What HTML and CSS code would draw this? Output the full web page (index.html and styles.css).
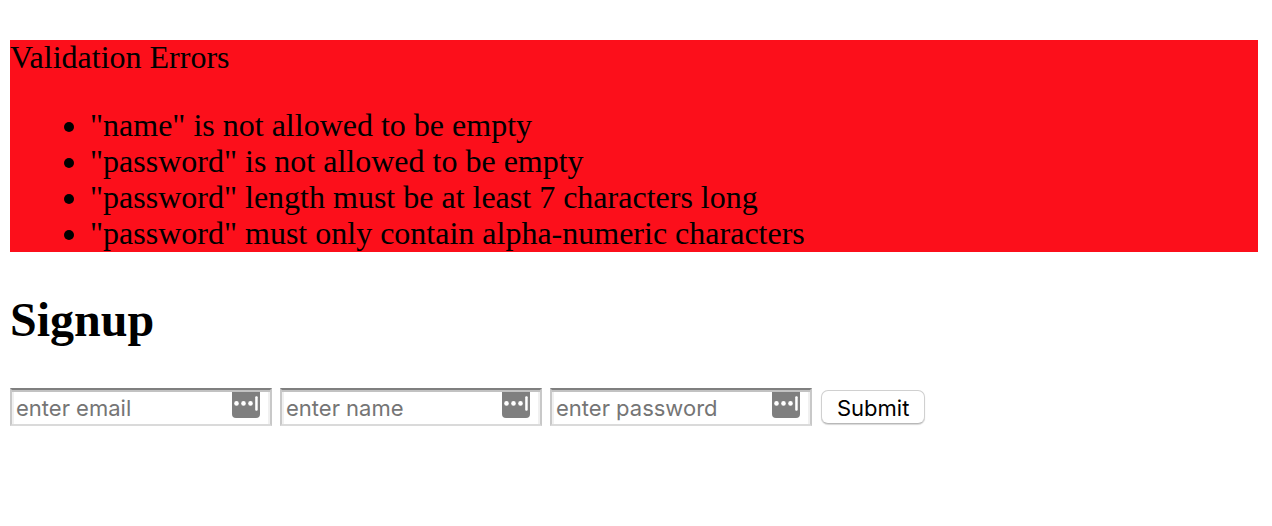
FILE: index.html
```html
<!DOCTYPE html>
<html lang="en">
<head>
<meta charset="utf-8">
<title>Signup</title>
<link rel="stylesheet" href="styles.css">
</head>
<body>
<svg class="defs" aria-hidden="true">
  <symbol id="key-badge" viewBox="0 0 28 26">
    <path fill="#7f7f7f" d="M0 0H28V22Q28 26 24 26H4Q0 26 0 22Z"/>
    <circle cx="4.500" cy="11.400" r="2.300" fill="#fff"/>
    <circle cx="11.500" cy="11.400" r="2.300" fill="#fff"/>
    <circle cx="18.500" cy="11.400" r="2.300" fill="#fff"/>
    <rect x="23.200" y="4.300" width="2.500" height="14.400" rx="1" fill="#fff"/>
  </symbol>
</svg>
<section class="errors">
  <p class="errors-title">Validation Errors</p>
  <ul class="errors-list">
    <li class="error">"name" is not allowed to be empty</li>
    <li class="error">"password" is not allowed to be empty</li>
    <li class="error">"password" length must be at least 7 characters long</li>
    <li class="error">"password" must only contain alpha-numeric characters</li>
  </ul>
</section>
<h1 class="title">Signup</h1>
<form class="signup">
  <div class="field">
    <input class="input" type="email" placeholder="enter email" aria-label="Email">
    <svg class="badge" aria-hidden="true"><use href="#key-badge"/></svg>
  </div>
  <div class="field">
    <input class="input" type="text" placeholder="enter name" aria-label="Name">
    <svg class="badge" aria-hidden="true"><use href="#key-badge"/></svg>
  </div>
  <div class="field">
    <input class="input" type="password" placeholder="enter password" aria-label="Password">
    <svg class="badge" aria-hidden="true"><use href="#key-badge"/></svg>
  </div>
  <button class="submit" type="submit">Submit</button>
</form>
</body>
</html>
```
FILE: styles.css
```css
body {
  margin: 40px 14px 40px 10px;
  background: #fff;
  color: #000;
  font-family: "Liberation Serif", "Times New Roman", serif;
  font-size: 32px;
  line-height: 34px;
}
.defs { position: absolute; width: 0; height: 0; }
.errors { background: #fc0f1b; }
.errors-title { margin: 0 0 34px; }
.errors-list { margin: 0; padding-left: 80px; }
.error { padding-bottom: 2px; }
.title { margin: 40px 0; font-size: 48px; line-height: 56px; }
.signup { display: flex; flex-wrap: wrap; align-items: center; gap: 8px; }
.field { position: relative; }
.input {
  display: block;
  box-sizing: border-box;
  width: 262px;
  height: 38px;
  margin: 0;
  padding: 2px 40px 0 4px;
  border: 2px solid #c8c8c8;
  border-top-color: #7f7f7f;
  border-bottom-color: #dadada;
  border-radius: 0;
  background: #fff;
  box-shadow: inset 0 2px #c2c2c2, inset 2px 0 #f0f0f0, inset -2px 0 #f0f0f0;
  font-family: Inter, sans-serif;
  font-size: 22px;
}
.input::placeholder { color: #757575; opacity: 1; }
.badge { position: absolute; top: 4px; right: 12px; width: 28px; height: 26px; }
.submit {
  height: 34px;
  margin-left: 1px;
  padding: 2px 15px 0;
  border: 1px solid #d0d0d0;
  border-bottom-color: #b8b8b8;
  border-radius: 7px;
  background: #fff;
  box-shadow: 0 1px 1px #d8d8d8;
  color: #000;
  font-family: Inter, sans-serif;
  font-size: 22px;
  line-height: 30px;
}
```
